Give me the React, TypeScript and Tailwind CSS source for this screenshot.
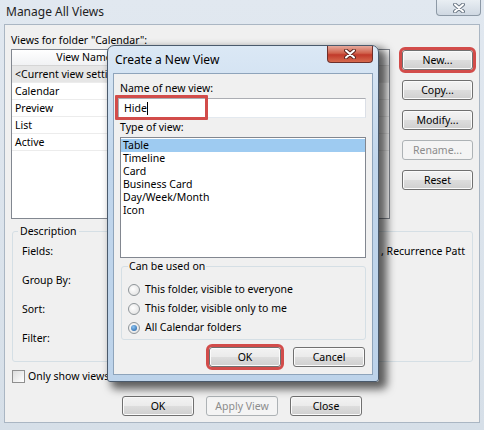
import React from 'react';

const FONT = "font-['Noto_Sans','Liberation_Sans',sans-serif]";

const btnBase =
  'h-[20px] rounded-[3px] border flex items-center justify-center text-[10.5px] leading-[15px] shrink-0';
const btnOn =
  'border-[#707070] bg-[linear-gradient(#f3f3f3_0%,#ebebeb_48%,#dddddd_52%,#cfcfcf_100%)] shadow-[inset_0_0_0_1px_#fbfbfb] text-black';
const btnOff = 'border-[#adb2b5] bg-[#f4f4f4] text-[#8c8c8c]';

const Button: React.FC<{ label: string; disabled?: boolean; className?: string }> = ({
  label,
  disabled,
  className = '',
}) => (
  <div className={`${btnBase} ${disabled ? btnOff : btnOn} ${className}`}>{label}</div>
);

const CloseGlyph: React.FC<{ dark: string }> = ({ dark }) => (
  <svg width="12" height="10" viewBox="0 0 12 10">
    <path d="M2 1.5 L10 8.5 M10 1.5 L2 8.5" stroke={dark} strokeWidth="4" strokeLinecap="round" />
    <path d="M2 1.5 L10 8.5 M10 1.5 L2 8.5" stroke="#ffffff" strokeWidth="2" strokeLinecap="round" />
  </svg>
);

const Radio: React.FC<{ checked?: boolean; label: string }> = ({ checked, label }) => (
  <div className="flex items-center h-[15px]">
    <div className="ml-[6px] w-[12px] h-[12px] rounded-full border border-[#8f9599] bg-[radial-gradient(circle_at_40%_40%,#ffffff,#dcdcdc)] flex items-center justify-center">
      {checked && (
        <div className="w-[6px] h-[6px] rounded-full bg-[radial-gradient(circle_at_40%_35%,#8cc4f2,#1d5a9e)]" />
      )}
    </div>
    <span className="ml-[5px]">{label}</span>
  </div>
);

const rows = ['<Current view settings>', 'Calendar', 'Preview', 'List', 'Active'];
const viewTypes = ['Table', 'Timeline', 'Card', 'Business Card', 'Day/Week/Month', 'Icon'];

const App: React.FC = () => {
  return (
    <div
      className={`${FONT} relative w-[484px] h-[430px] overflow-hidden flex flex-col bg-[linear-gradient(#e1e8f0,#d6dfe8)] text-black text-[10.5px] leading-[15px]`}
    >
      {/* outer title bar */}
      <div className="h-[24px] flex items-start shrink-0">
        <span className="pl-[6px] pt-[3px] text-[12px] leading-[17px] text-[#1e1e1e]">Manage All Views</span>
        <div className="ml-auto mr-[3px] w-[45px] h-[16px] rounded-b-[4px] border border-t-0 border-[#8d99a6] bg-[linear-gradient(#e9eef3,#cfd8e2)] flex items-center justify-center">
          <CloseGlyph dark="#6c7886" />
        </div>
      </div>

      {/* outer client */}
      <div className="mx-[4px] flex-1 bg-[#f0f0f0] border border-[#aab6c3] flex flex-col px-[6px] pt-[8px]">
        <div>Views for folder "Calendar":</div>

        <div className="mt-[1px] flex gap-[12px]">
          {/* views table */}
          <div className="w-[379px] h-[170px] border border-[#828790] bg-white flex flex-col">
            <div className="h-[16px] flex border-b border-[#d5d5d5] bg-[linear-gradient(#ffffff,#f1f2f4)]">
              <div className="w-[145px] border-r border-[#d5d5d5] text-center">View Name</div>
              <div className="w-[120px] border-r border-[#d5d5d5]" />
            </div>
            {rows.map((r, i) => (
              <div
                key={r}
                className={`h-[17px] flex items-center pl-[3px] border-b border-[#ececec] whitespace-nowrap ${
                  i === 0 ? 'bg-[#e6e6e6]' : ''
                }`}
              >
                {r}
              </div>
            ))}
          </div>

          {/* right buttons */}
          <div className="flex flex-col gap-[10px] pt-[1px]">
            <Button label="New..." className="w-[71px] outline-3 outline-offset-0 outline-[#d24c4a]" />
            <Button label="Copy..." className="w-[71px]" />
            <Button label="Modify..." className="w-[71px]" />
            <Button label="Rename..." disabled className="w-[71px]" />
            <Button label="Reset" className="w-[71px]" />
          </div>
        </div>

        {/* description */}
        <fieldset className="mt-[5px] ml-[1px] border border-[#d5dfe5] rounded-[3px]">
          <legend className="ml-[5px] px-[2px]">Description</legend>
          <div className="pt-[5px] pb-[15px] pl-[9px] pr-[7px] flex flex-col gap-[14px]">
            <div className="flex h-[15px]">
              <span className="w-[78px] shrink-0">Fields:</span>
              <span className="ml-auto whitespace-nowrap">, Recurrence Patt</span>
            </div>
            <div className="h-[15px]">Group By:</div>
            <div className="h-[15px]">Sort:</div>
            <div className="h-[15px]">Filter:</div>
          </div>
        </fieldset>

        {/* only show views */}
        <div className="mt-[7px] flex items-center h-[15px]">
          <div className="ml-[1px] w-[13px] h-[13px] border border-[#8f8f8f] bg-[linear-gradient(135deg,#dcdcdc,#ffffff)]" />
          <span className="ml-[3px] whitespace-nowrap">Only show views created for this folder</span>
        </div>

        {/* bottom buttons */}
        <div className="mt-[12px] flex justify-center gap-[12px]">
          <Button label="OK" className="w-[72px]" />
          <Button label="Apply View" disabled className="w-[72px]" />
          <Button label="Close" className="w-[72px]" />
        </div>
      </div>
      <div className="h-[7px] shrink-0" />

      {/* Create a New View dialog */}
      <div className="absolute left-[107px] top-[45px] w-[272px] h-[337px] rounded-t-[7px] rounded-b-[3px] border border-[#4a5a6c] bg-[linear-gradient(#dbe8f5,#c1d6ec_35%,#bdd3ea)] shadow-[6px_5px_8px_2px_rgba(0,0,0,0.62)] flex flex-col">
        <div className="h-[27px] flex items-start shrink-0">
          <span className="pl-[7px] pt-[5px] text-[12px] leading-[17px] text-black">Create a New View</span>
          <div className="ml-auto mr-[5px] w-[46px] h-[17px] rounded-b-[4px] border border-t-0 border-[#6d2f2a] bg-[linear-gradient(#e6a99c,#d0614b_45%,#c1392a_55%,#d66a4e)] flex items-center justify-center">
            <CloseGlyph dark="#5d2620" />
          </div>
        </div>

        <div className="mx-[5px] h-[302px] border border-[#8ea4bb] bg-[#f0f0f0] flex flex-col">
          <div className="pl-[6px] pt-[7px]">Name of new view:</div>
          <div className="relative ml-[4px] mt-[2px] w-[248px] h-[20px] border border-[#abadb3] border-b-[#e3e9ef] border-r-[#dbdfe6] bg-white flex items-center pl-[5px]">
            <span>Hide</span>
            <span className="w-[1px] h-[13px] bg-black" />
            <div className="absolute left-[-4px] top-[-4px] w-[93px] h-[25px] border-[3px] border-[#d24c4a] rounded-[1px]" />
          </div>
          <div className="pl-[6px] mt-[2px]">Type of view:</div>
          <div className="ml-[6px] mt-[2px] w-[246px] h-[121px] border border-[#828790] bg-white pt-[1px]">
            {viewTypes.map((v, i) => (
              <div
                key={v}
                className={`h-[13px] leading-[13px] pl-[2px] overflow-hidden ${i === 0 ? 'bg-[#9ecbf1]' : ''}`}
              >
                {v}
              </div>
            ))}
          </div>

          <fieldset className="ml-[7px] mt-[1px] w-[245px] border border-[#d5dfe5] rounded-[3px] pb-[4px]">
            <legend className="ml-[6px] px-[1px]">Can be used on</legend>
            <div className="mt-[8px] flex flex-col gap-[4px]">
              <Radio label="This folder, visible to everyone" />
              <Radio label="This folder, visible only to me" />
              <Radio checked label="All Calendar folders" />
            </div>
          </fieldset>

          <div className="mt-[7px] flex justify-end gap-[12px] pr-[7px]">
            <Button label="OK" className="w-[72px] outline-3 outline-offset-0 outline-[#d24c4a]" />
            <Button label="Cancel" className="w-[72px]" />
          </div>
        </div>
      </div>
    </div>
  );
};

export default App;
